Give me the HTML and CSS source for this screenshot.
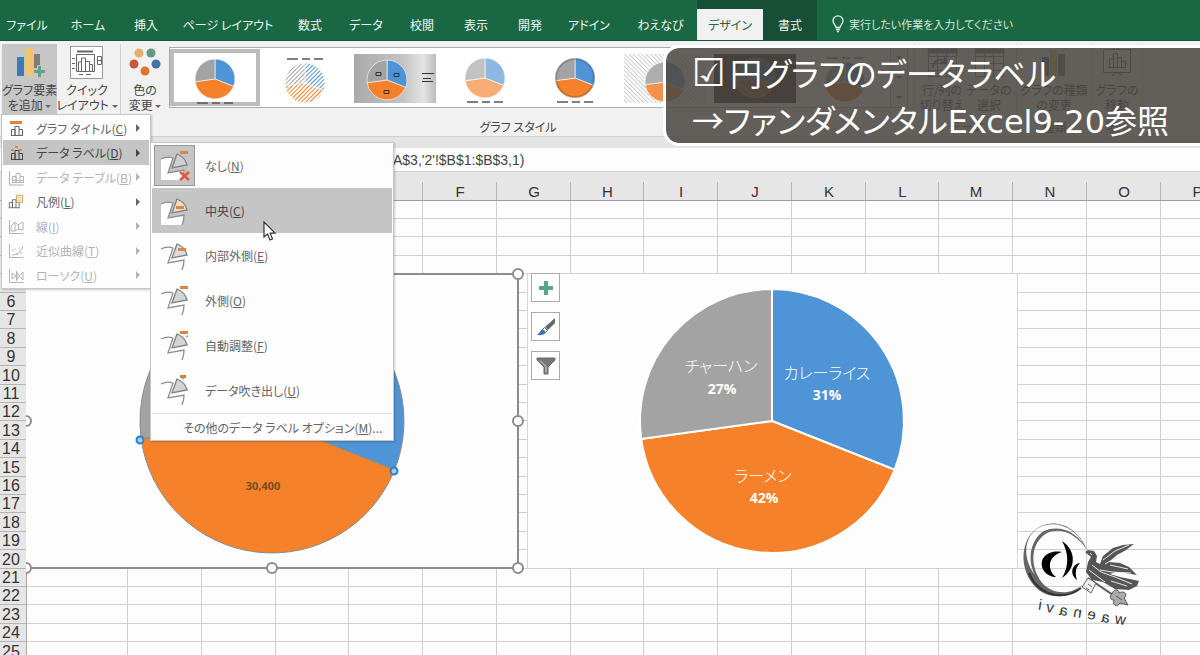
FILE: index.html
```
<!DOCTYPE html>
<html lang="ja">
<head>
  <meta charset="UTF-8">
  <meta name="viewport" content="width=device-width, initial-scale=1.0">
  <title>円グラフのデータラベル</title>
  <link rel="stylesheet" href="styles.css">
</head>
<body>
  <!-- shared shapes -->
  <svg class="defs" aria-hidden="true">
    <defs>
      <linearGradient id="silver"><stop offset="0" stop-color="#aaa"/><stop offset=".6" stop-color="#c4c4c4"/><stop offset=".85" stop-color="#e4e4e4"/><stop offset="1" stop-color="#bbb"/></linearGradient>
      <pattern id="hatch" width="3" height="3" patternUnits="userSpaceOnUse" patternTransform="rotate(45)"><rect width="2" height="3" fill="#fff"/></pattern>
      <pattern id="stripes" width="3" height="3" patternUnits="userSpaceOnUse" patternTransform="rotate(-45)"><rect width="1" height="3" fill="#ccc"/></pattern>
      <g id="pie" stroke="#fff" stroke-opacity=".6">
        <path fill="#4f94d6" d="M0 0V-20A20 20 0 0 1 18.6 7.4Z"/>
        <path fill="#f5822a" d="M0 0L18.6 7.4A20 20 0 0 1 -19.8 2.7Z"/>
        <path fill="#a3a3a3" d="M0 0L-19.8 2.7A20 20 0 0 1 0 -20Z"/>
      </g>
      <path id="caption" stroke="#555" stroke-width="1.5" d="M-18 0h11M-3 0h8M9 0h9"/>
      <g id="slice">
        <path fill="none" stroke="#8b8f93" stroke-width="1.3" d="M1 9Q7 6 13 8L8 23L24 20Q24 25 22 30"/>
        <path stroke="#7d8287" stroke-width="1.3" d="M17 4L12 18L27 15Q25 7 17 4Z"/>
      </g>
      <path id="block" fill="#fff" d="M1 9Q7 6 13 8L8 23L24 20Q24 25 22 30H1Z"/>
      <path id="bars" fill="none" stroke="currentColor" d="M1.500 15.500V9.500h3.500v6M5 15.500V6.500h4v9M9 9.500h3.500v6M1 15.500h12"/>
    </defs>
  </svg>

  <div class="app">
    <header class="tabs">
      <nav class="tab-list">
        <button>ファイル</button>
        <button>ホーム</button>
        <button>挿入</button>
        <button>ページ レイアウト</button>
        <button>数式</button>
        <button>データ</button>
        <button>校閲</button>
        <button>表示</button>
        <button>開発</button>
        <button>アドイン</button>
        <button>わえなび</button>
        <button class="active">デザイン</button>
        <button class="context">書式</button>
      </nav>
      <label class="tell-me">
        <svg width="12" height="18" viewBox="0 0 12 18" fill="none" stroke="#e4f2ea" stroke-width="1.300"><path d="M4 12.500C4 10 1 9 1 5.800A5 5 0 0 1 11 5.800C11 9 8 10 8 12.500ZM4 14.500h4M5 16.500h2"/></svg>
        <input type="text" placeholder="実行したい作業を入力してください">
      </label>
    </header>

    <div class="ribbon">
      <section class="group layout">
        <div class="group-body">
          <button class="big pressed">
            <svg width="34" height="34" viewBox="0 0 34 34"><path fill="#4277b5" d="M4 11h7v19H4z"/><path fill="#f0c473" d="M13 2h8v28h-8z"/><path fill="#807a7a" d="M21 8h6v14h-6z"/><path fill="#5ba58e" stroke="#c6c6c6" d="M24.500 19.500h4v4h4v4h-4v4h-4v-4h-4v-4h4z"/></svg>
            <span>グラフ要素<br>を追加 <i class="caret"></i></span>
          </button>
          <button class="big">
            <svg width="34" height="34" viewBox="0 0 34 34" fill="none" stroke="#666"><path fill="#fff" stroke="#999" d="M.5.5h32v32H.5z"/><path stroke-width="2" d="M7 5.500h16"/><path d="M6.500 8.500h18v17h-18zM2 12.500h3M2 17.500h3M2 22.500h3M8.500 25v-9h3v9M11.500 16v-4h4v13M15.500 15.500h4v10M19.500 18.500h3v7M27.500 10.500h4v8h-4zM27.500 14.500h4M9 28.500h4M16 28.500h5"/></svg>
            <span>クイック<br>レイアウト <i class="caret"></i></span>
          </button>
        </div>
      </section>
      <section class="group styles">
        <div class="group-body">
          <button class="big colors">
            <svg width="34" height="34" viewBox="0 0 34 34"><circle cx="11" cy="7" r="4.500" fill="#e5b06b"/><circle cx="23" cy="7" r="4.500" fill="#5d9a88"/><circle cx="6" cy="18" r="4.500" fill="#c9573c"/><circle cx="28" cy="18" r="4.500" fill="#4470ad"/><circle cx="17" cy="25" r="4.500" fill="#e1742e"/></svg>
            <span>色の<br>変更 <i class="caret"></i></span>
          </button>
          <div class="gallery">
            <button class="thumb selected" aria-label="スタイル 1"><svg viewBox="-41 -26 82 52"><use href="#pie"/><use href="#caption" y="24"/></svg></button>
            <button class="thumb" aria-label="スタイル 2"><svg viewBox="-41 -26 82 52"><use href="#pie" y="5"/><circle cy="5" r="21" fill="url(#hatch)"/><use href="#caption" y="-19"/></svg></button>
            <button class="thumb" aria-label="スタイル 3"><svg viewBox="-41 -26 82 52"><path fill="url(#silver)" d="M-41-24h82v49h-82z"/><use href="#pie" x="-8" y="2"/><path fill="none" stroke="#333" d="M-19-5.500h5v3h-5zM-1-4.500h5v3h-5zM-11 12.500h5v3h-5zM27-4.500h12M28 .5h8M27 3.500h11"/></svg></button>
            <button class="thumb" aria-label="スタイル 4"><svg viewBox="-41 -26 82 52"><use href="#pie" opacity=".65"/><use href="#caption" y="24"/></svg></button>
            <button class="thumb" aria-label="スタイル 5"><svg viewBox="-41 -26 82 52"><use href="#pie"/><circle r="19" fill="none" stroke="#333" stroke-opacity=".25" stroke-width="2"/><use href="#caption" y="24"/></svg></button>
            <button class="thumb" aria-label="スタイル 6"><svg viewBox="-41 -26 82 52"><path fill="url(#stripes)" d="M-41-24h82v49h-82z"/><use href="#pie" y="4" opacity=".85"/></svg></button>
            <button class="thumb" aria-label="スタイル 7"><svg viewBox="-41 -26 82 52"><path fill="#2b2826" d="M-41-24h82v49h-82z"/><use href="#pie" opacity=".5"/></svg></button>
            <button class="thumb" aria-label="スタイル 8"><svg viewBox="-41 -26 82 52"><use href="#pie" y="4"/><use href="#caption" y="-20"/></svg></button>
            <div class="spin"><i class="caret"></i><i class="caret"></i><i class="caret"></i></div>
          </div>
        </div>
        <h2>グラフ スタイル</h2>
      </section>
      <section class="group data">
        <div class="group-body">
          <button class="big"><svg width="34" height="34" viewBox="0 0 34 34" fill="none" stroke="#777"><path fill="#fff" d="M3.500 3.500h28v27h-28zM3 10.500h28M3 17.500h28M3 24.500h28M12.500 3v27M21.500 3v27"/><path fill="#777" d="M3 3h29v4H3z"/><path stroke="#3b78b5" stroke-width="2" d="M8 22c0-8 6-9 12-7M20 11v6h-5"/></svg><span>行/列の<br>切り替え</span></button>
          <button class="big"><svg width="34" height="34" viewBox="0 0 34 34" fill="none" stroke="#777"><path fill="#fff" d="M3.500 3.500h28v27h-28zM3 10.500h28M3 17.500h28M3 24.500h28M12.500 3v27M21.500 3v27"/><path fill="#777" d="M3 3h29v4H3z"/></svg><span>データの<br>選択</span></button>
        </div>
        <h2>データ</h2>
      </section>
      <section class="group kind">
        <div class="group-body">
          <button class="big"><svg width="34" height="34" viewBox="0 0 34 34"><path fill="#4277b5" d="M5 11h7v19H5z"/><path fill="#f0c473" d="M13 4h7v26h-7z"/><path fill="#807a7a" d="M21 8h7v22h-7z"/></svg><span>グラフの種類<br>の変更</span></button>
        </div>
        <h2>種類</h2>
      </section>
      <section class="group place">
        <div class="group-body">
          <button class="big"><svg width="34" height="34" viewBox="0 0 34 34" fill="none" stroke="#666"><path fill="#fff" d="M3.500 3.500h27v23h-27z"/><path d="M8 21.500h18M9.500 21v-8h4v8M13.500 13V7.500h4V21M17.500 11.500h4V21M21.500 15.500h4V21M12 29.500l5-3 5 3"/></svg><span>グラフの<br>移動</span></button>
        </div>
        <h2>場所</h2>
      </section>

      <!-- chart element menu -->
      <ul class="menu">
        <li><button><svg width="16" height="17" viewBox="0 0 16 17"><use href="#bars" x="2"/><path fill="#e0853f" d="M2 1h12v3H2z"/></svg><span>グラフ タイトル(<u>C</u>)</span></button></li>
        <li><button class="hot"><svg width="16" height="17" viewBox="0 0 16 17"><use href="#bars" x="2"/><path fill="#e0853f" d="M3 5h3v2H3zM7 2h3v2H7zM11 5h3v2h-3z"/></svg><span>データ ラベル(<u>D</u>)</span></button></li>
        <li><button disabled><svg width="16" height="17" viewBox="0 0 16 17"><use href="#bars" x="3" y="-2"/><path fill="none" stroke="currentColor" d="M1.500 2v14h14M4 11.500h11"/></svg><span>データ テーブル(<u>B</u>)</span></button></li>
        <li><button><svg width="16" height="17" viewBox="0 0 18 17"><use href="#bars"/><path fill="#fff2cc" stroke="#c59a4e" d="M9.500 1.500h7v8h-7z"/><path stroke="#888" stroke-dasharray="1 1" d="M11 4h4M11 7h4"/></svg><span>凡例(<u>L</u>)</span></button></li>
        <li><button disabled><svg width="16" height="17" viewBox="0 0 16 17" fill="none" stroke="currentColor"><path d="M1.500 2v13.500h14M3 13V8l4-4 3 3 5-3v8l-4-1-4 2-4 0M7 4v9M10.500 7v5"/></svg><span>線(<u>I</u>)</span></button></li>
        <li><button disabled><svg width="16" height="17" viewBox="0 0 16 17" fill="none" stroke="currentColor"><path d="M1.500 2v13.500h14M4 13c5 0 9-3 11-9"/><path d="M4 8h2M7 7h1M8 12h2M11 6h1M12 11h2"/></svg><span>近似曲線(<u>T</u>)</span></button></li>
        <li><button disabled><svg width="16" height="17" viewBox="0 0 16 17" fill="none" stroke="currentColor"><path d="M1.500 2v13.500h14M4 6l4 3-4 3zM8.500 4v10M8 6h2v6H8M15 5l-4 4 4 4z"/></svg><span>ローソク(<u>U</u>)</span></button></li>
      </ul>

      <ul class="menu submenu">
        <li><button><i class="icon current"><svg width="30" height="32" viewBox="0 0 30 32"><use href="#block"/><use href="#slice" fill="#d0d0d0"/><path fill="#e0853f" d="M20 1h8v3h-8z"/><path stroke="#e05a3c" stroke-width="2.500" d="M20 22l9 8M29 22l-9 8"/></svg></i><span>なし(<u>N</u>)</span></button></li>
        <li><button class="hot"><i class="icon"><svg width="30" height="32" viewBox="0 0 30 32"><use href="#block"/><use href="#slice" fill="#f3dcc4"/><path fill="#e0853f" d="M16 11h8v3h-8z"/></svg></i><span>中央(<u>C</u>)</span></button></li>
        <li><button><i class="icon"><svg width="30" height="32" viewBox="0 0 30 32"><use href="#slice" fill="#dcdcdc"/><path fill="#e0853f" d="M18 8h8v3h-8z"/></svg></i><span>内部外側(<u>E</u>)</span></button></li>
        <li><button><i class="icon"><svg width="30" height="32" viewBox="0 0 30 32"><use href="#slice" fill="#d4d4d4"/><path fill="#e0853f" d="M20 1h8v3h-8z"/></svg></i><span>外側(<u>O</u>)</span></button></li>
        <li><button><i class="icon"><svg width="30" height="32" viewBox="0 0 30 32"><use href="#slice" fill="#d4d4d4"/><path fill="#e0853f" d="M20 1h8v3h-8zM25 7l3-2v2z"/></svg></i><span>自動調整(<u>F</u>)</span></button></li>
        <li><button><i class="icon"><svg width="30" height="32" viewBox="0 0 30 32"><use href="#slice" fill="#d4d4d4"/><path fill="#d0813e" d="M20 0h6v3h-2l-1 2-1-2h-2z"/></svg></i><span>データ吹き出し(<u>U</u>)</span></button></li>
        <li class="more"><button>その他のデータ ラベル オプション(<u>M</u>)...</button></li>
      </ul>
      <svg class="cursor" width="14" height="21" viewBox="0 0 14 21"><path fill="#fff" stroke="#333" stroke-width="1.200" d="M1 1V16L4.500 13L7 19L9.500 18L7.200 12.200H12Z"/></svg>
    </div>

    <input class="formula" type="text" aria-label="数式バー" value="A$3,'2'!$B$1:$B$3,1)">

    <main class="sheet">
      <table id="cells">
        <thead><tr id="letters"></tr></thead>
        <tbody id="rows"></tbody>
      </table>

      <div class="canvas">
        <svg class="chart first" viewBox="26 260 500 320" width="500" height="320">
          <path class="frame" d="M20 274H518V568H20Z"/>
          <g stroke="#8a8a8a">
            <path fill="#4f94d6" d="M272 421V289A132 132 0 0 1 394.600 469.800Z"/>
            <path fill="#f5822a" d="M272 421L394.600 469.800A132 132 0 0 1 141.200 438.900Z"/>
            <path fill="#a3a3a3" d="M272 421L141.200 438.900A132 132 0 0 1 272 289Z"/>
          </g>
          <text class="value" x="263" y="490">30,400</text>
          <g class="point"><circle cx="140" cy="440" r="3.500"/><circle cx="394" cy="471" r="3.500"/></g>
          <g class="handle"><circle cx="518" cy="274" r="5"/><circle cx="518" cy="421" r="5"/><circle cx="518" cy="568" r="5"/><circle cx="272" cy="568" r="5"/><circle cx="26" cy="421" r="5"/><circle cx="26" cy="568" r="5"/></g>
        </svg>

        <svg class="chart second" viewBox="527 274 491 294" width="491" height="294">
          <g stroke="#fff" stroke-width="2">
            <path fill="#4f94d6" d="M772 421V289A132 132 0 0 1 894.600 469.800Z"/>
            <path fill="#f5822a" d="M772 421L894.600 469.800A132 132 0 0 1 641.200 438.900Z"/>
            <path fill="#a3a3a3" d="M772 421L641.200 438.900A132 132 0 0 1 772 289Z"/>
          </g>
          <g class="label">
            <text x="721" y="372">チャーハン</text><text class="percent" x="722" y="394">27%</text>
            <text x="827" y="379">カレーライス</text><text class="percent" x="827" y="400">31%</text>
            <text x="763" y="482">ラーメン</text><text class="percent" x="764" y="503">42%</text>
          </g>
          <path fill="none" stroke="#d8d8d8" d="M527.500 274V568M1017.500 274V568"/>
        </svg>

        <div class="chart-buttons">
          <button aria-label="グラフ要素"><svg width="16" height="16" viewBox="0 0 16 16"><path fill="#5ba58e" d="M6 1h4v5h5v4h-5v5H6v-5H1V6h5z"/></svg></button>
          <button aria-label="グラフ スタイル"><svg width="20" height="20" viewBox="0 0 20 20"><path fill="#666" d="M19 1V6L12 13L9 10Z"/><path fill="#fff" stroke="#555" d="M8.500 10.500l3 3-2 2-3-3z"/><path fill="#3c78b0" d="M7 12.500c2 1 3 2 2 4-2 2-6 2-8 1 3-1 3-5 6-5z"/></svg></button>
          <button aria-label="グラフ フィルター"><svg width="20" height="18" viewBox="0 0 20 18"><path fill="#777" stroke="#666" d="M1 1h18v2l-7 7v7H8v-7L1 3z"/><path fill="none" stroke="#ddd" d="M4 3.500l6 6v6"/></svg></button>
        </div>

        <svg class="logo" viewBox="1015 515 135 120" width="135" height="120">
          <!-- moon -->
          <path fill="#666" fill-rule="evenodd" d="M1087 550C1078 526 1055 518 1039 527C1022 537 1019 562 1030 580C1042 600 1067 602 1083 584C1070 597 1049 594 1040 580C1029 562 1032 542 1047 533C1061 527 1076 534 1087 550ZM1084 545C1074 530 1058 525 1044 531C1030 540 1027 560 1035 575C1022 558 1024 537 1038 528C1055 519 1075 527 1084 545Z"/>
          <path fill="none" stroke="#333" stroke-width="2" d="M1029 573C1038 595 1063 602 1081 588"/>
          <path d="M1062 552C1047 549 1037 560 1044 571C1047 575 1052 577 1056 577C1048 571 1046 557 1062 552ZM1062 541C1077 551 1076 569 1062 578C1069 566 1069 554 1062 541ZM1080 563C1072 564 1069 574 1077 580C1075 574 1075 568 1080 563Z"/>
          <!-- bird -->
          <path fill="#555" d="M1085 552l3-2 6 1 3 5-1 6 4 2 3-8 10-8 10-3 11-1-8 6-9 5-8 7 11 1 9 4 8 8-12-2-9-1-6 2 10 3 10 2 9 2-2 5-8 4-14-1-12-7-11-2-6-8 2-10 3-5z"/>
          <path fill="none" stroke="#e8e8e8" d="M1103 560l12-9 14-6M1105 564l14-8M1092 565l9 7 14 5 17 7M1100 570l12 2 19 1M1089 570l16 12M1090 553l2 2M1110 565l18 4M1111 581l16 5"/>
          <!-- key -->
          <path fill="none" stroke="#555" stroke-width="2" d="M1088 578l25 17"/>
          <path fill="#eee" stroke="#666" d="M1088 578l8 5-5 10-9-6zM1088 584l4 3M1086 588l3 2"/>
          <path fill="#aaa" stroke="#555" d="M1112 594c2-6 7-5 7-1 6-3 9 2 5 5l4 7-8-2c-3 5-8 2-6-3-4 0-5-4-2-6zM1116 596l6 4"/>
          <text class="wordmark" transform="translate(2160 0) scale(-1 1)" x="1035 1051 1065 1079 1093 1107 1119" y="625 623 620 618 616 613 610" rotate="-9">waenavi</text>
        </svg>
      </div>
    </main>

    <aside class="banner">
      <p><span class="check">☑</span>円グラフのデータラベル</p>
      <p>→ファンダメンタル<span class="wide">Excel9-20</span>参照</p>
    </aside>
  </div>

  <script>
    const letters = 'ABCDEFGHIJKLMNOP'.split('');
    document.getElementById('letters').innerHTML =
      '<th></th>' + letters.map(l => `<th>${l}</th>`).join('');

    let rows = '';
    for (let r = 1; r <= 25; r++) {
      rows += `<tr><th>${r}</th>${'<td></td>'.repeat(letters.length)}</tr>`;
    }
    document.getElementById('rows').innerHTML = rows;
  </script>
</body>
</html>
```
FILE: styles.css
```
* {
  box-sizing: border-box;
}
body {
  margin: 0;
  font-family: "Noto Sans CJK JP", sans-serif;
  font-size: 12px;
  font-feature-settings: "palt";
  color: #444;
}
button, input {
  font: inherit;
  font-feature-settings: inherit;
  color: inherit;
  border: none;
  background: none;
  padding: 0;
  margin: 0;
}
button {
  white-space: nowrap;
}
.defs {
  position: absolute;
  width: 0;
  height: 0;
}
.app {
  position: relative;
  display: flex;
  flex-direction: column;
  height: 100vh;
  overflow: hidden;
}

/* tabs */
.tabs {
  display: flex;
  flex: none;
  height: 41px;
  background: #1a6843;
  border-bottom: 1px solid #15573a;
  color: #f0f7f3;
}
.tab-list {
  display: grid;
  grid-template-columns: 54px 68px 48px 116px 48px 64px 48px 60px 48px 70px 73px 66px 54px;
}
.tab-list button {
  display: flex;
  align-items: center;
  justify-content: center;
  padding-top: 8px;
}
.tab-list .active {
  background: #f1f1f1;
  color: #1a6843;
  border-top: 9px solid #164f35;
  padding-top: 0;
}
.tab-list .context {
  background: #164f35;
}
.tell-me {
  display: flex;
  align-items: center;
  gap: 5px;
  flex: 1;
  padding: 8px 0 0 15px;
}
.tell-me input {
  flex: 1;
  font-size: 11px;
}
.tell-me input::placeholder {
  color: #d3e6db;
}

/* ribbon */
.ribbon {
  position: relative;
  display: flex;
  flex: none;
  height: 96px;
  background: #f1f1f1;
  border-bottom: 1px solid #d2d2d2;
}
.group {
  flex: none;
  display: flex;
  flex-direction: column;
  padding-top: 3px;
}
.group-body {
  display: flex;
  justify-content: center;
  height: 70px;
  border-right: 1px solid #d0d0d0;
}
.group h2 {
  margin: 4px 0 0;
  font-size: 12px;
  line-height: 18px;
  font-weight: normal;
  text-align: center;
}
.layout {
  width: 121px;
}
.styles {
  width: 794px;
}
.data {
  width: 102px;
}
.kind {
  width: 75px;
}
.place {
  width: 51px;
}
.big {
  display: flex;
  flex-direction: column;
  align-items: center;
  gap: 2px;
  padding-top: 2px;
  line-height: 15px;
}
.layout .group-body {
  justify-content: flex-start;
  padding-left: 2px;
}
.layout .big {
  width: 55px;
}
.layout .big + .big {
  width: 60px;
}
.pressed {
  background: #c6c6c6;
}
.colors {
  width: 48px;
}
.caret {
  display: inline-block;
  border: 3px solid transparent;
  border-top-color: #666;
  border-bottom: none;
  vertical-align: middle;
}
.data .big {
  width: 47px;
}
.gallery {
  display: flex;
  flex: 1;
  height: 61px;
  margin: 3px 6px 0 0;
  background: #fff;
  border: 1px solid #ababab;
}
.thumb {
  width: 90px;
}
.thumb svg {
  display: block;
  width: 82px;
  height: 52px;
  margin: auto;
}
.thumb.selected {
  height: 57px;
  margin-top: 1px;
  border: 4px solid #bcbcbc;
}
.spin {
  display: flex;
  flex-direction: column;
  justify-content: space-around;
  align-items: center;
  flex: 1;
  background: #eee;
  border-left: 1px solid #ababab;
}

/* menus */
.menu {
  position: absolute;
  z-index: 2;
  left: 1px;
  top: 73px;
  width: 150px;
  margin: 0;
  padding: 1px;
  list-style: none;
  color: #666;
  background: #fdfdfd;
  border: 1px solid #c6c6c6;
  box-shadow: 1px 1px 2px rgba(0,0,0,0.2);
}
.menu button {
  display: flex;
  align-items: center;
  width: 100%;
  height: 24px;
  padding-left: 5px;
  text-align: left;
}
.menu li:nth-child(even) button {
  height: 25px;
}
.menu svg {
  flex: none;
}
.menu button > span {
  margin-left: 12px;
}
.menu:not(.submenu) button::after {
  content: "";
  margin-left: auto;
  margin-right: 9px;
  border: 4px solid transparent;
  border-left-color: currentColor;
  border-right: none;
}
.menu button:disabled {
  color: #b4b4b4;
}
.menu .hot {
  background: #c5c5c5;
  color: #444;
}
.submenu {
  z-index: 3;
  left: 150px;
  top: 101px;
  width: 244px;
  padding: 0 1px;
}
.submenu li button, .submenu li:nth-child(even) button {
  height: 45px;
  padding-left: 2px;
}
.submenu .icon {
  display: flex;
  align-items: center;
  justify-content: center;
  width: 41px;
  height: 41px;
  border: 1px solid transparent;
}
.submenu .current {
  background: #c5c5c5;
  border-color: #999;
}
.submenu button > span {
  margin-left: 10px;
}
.submenu .more {
  border-top: 1px solid #e1e1e1;
}
.submenu .more button {
  height: 26px;
  padding-left: 31px;
}
.cursor {
  position: absolute;
  z-index: 4;
  left: 263px;
  top: 180px;
}

/* formula bar */
.formula {
  flex: none;
  width: 100%;
  height: 35px;
  padding: 0 0 0 393px;
  border-top: 11px solid #e4e4e4;
  border-bottom: 1px solid #d0d0d0;
  background: #fdfdfd;
  font-family: "Liberation Sans", sans-serif;
  font-size: 14px;
}

/* sheet */
.sheet {
  position: relative;
  flex: 1;
  overflow: hidden;
  background: #fdfdfd;
}
#cells {
  table-layout: fixed;
  width: 1234px;
  border-collapse: separate;
  border-spacing: 0;
  font-family: "Liberation Sans", sans-serif;
  font-size: 15px;
  color: #333;
}
#cells th, #cells td {
  height: 18px;
  padding: 0;
  border-right: 1px solid #d0d0d0;
  border-bottom: 1px solid #d0d0d0;
  line-height: 17px;
}
#cells th {
  background: #e6e6e6;
  font-weight: normal;
}
#cells thead th {
  width: 74px;
  height: 28px;
  padding-top: 11px;
  border-bottom-color: #9c9c9c;
  border-right: none;
  background: linear-gradient(#b8b8b8, #b8b8b8) right bottom / 1px 18px no-repeat #e6e6e6;
}
#cells thead th:first-child {
  width: 27px;
}
#cells thead th:nth-child(2) {
  width: 101px;
}
#cells thead th:nth-child(4n+5) {
  width: 73px;
}
#cells tbody th {
  padding-right: 4px;
  border-right-color: #aaa;
  border-bottom-color: #b5b5b5;
  font-size: 16px;
}
#cells tr:nth-child(5n+3) td, #cells tr:nth-child(5n) td {
  height: 19px;
}

/* charts lie over the cells */
.canvas {
  position: absolute;
  left: 26px;
  top: 28px;
  right: 0;
  bottom: 0;
  overflow: hidden;
}
.chart {
  position: absolute;
}
.first {
  left: 0;
  top: 60px;
}
.second {
  left: 501px;
  top: 74px;
  background: #fdfdfd;
}
.frame {
  fill: #fdfdfd;
  stroke: #8c8c8c;
  stroke-width: 2;
}
.handle circle {
  fill: #fff;
  stroke: #8c8c8c;
  stroke-width: 2;
}
.point circle {
  fill: #9dccf2;
  stroke: #2f7fc4;
  stroke-width: 2;
}
.value {
  font: bold 11px "Noto Sans", sans-serif;
  fill: #7c4a22;
  text-anchor: middle;
}
.label {
  font-size: 16px;
  font-weight: 300;
  fill: #fff;
  text-anchor: middle;
}
.percent {
  font: bold 14px "Open Sans", sans-serif;
}
.chart-buttons {
  position: absolute;
  left: 505px;
  top: 73px;
  display: flex;
  flex-direction: column;
  gap: 10px;
}
.chart-buttons button {
  display: flex;
  align-items: center;
  justify-content: center;
  width: 29px;
  height: 29px;
  background: #fff;
  border: 1px solid #ababab;
}
.logo {
  position: absolute;
  left: 989px;
  top: 315px;
}
.wordmark {
  font: 15px "Liberation Sans", sans-serif;
  fill: #333;
}

/* caption banner */
.banner {
  position: absolute;
  z-index: 5;
  left: 663px;
  right: -20px;
  top: 45px;
  height: 101px;
  padding: 2px 0 0 26px;
  border: 3px solid #fff;
  border-radius: 16px;
  background: rgba(74,70,65,0.86);
  background-clip: padding-box;
  color: #fff;
  font-family: "Noto Sans", "Noto Sans CJK JP", sans-serif;
  font-size: 32px;
  line-height: 47px;
  white-space: nowrap;
}
.banner p {
  margin: 0;
}
.check {
  font-family: "DejaVu Sans", sans-serif;
  font-size: 38px;
  line-height: 40px;
  margin-right: 4px;
}
.wide {
  font-family: "DejaVu Sans", sans-serif;
}
```
